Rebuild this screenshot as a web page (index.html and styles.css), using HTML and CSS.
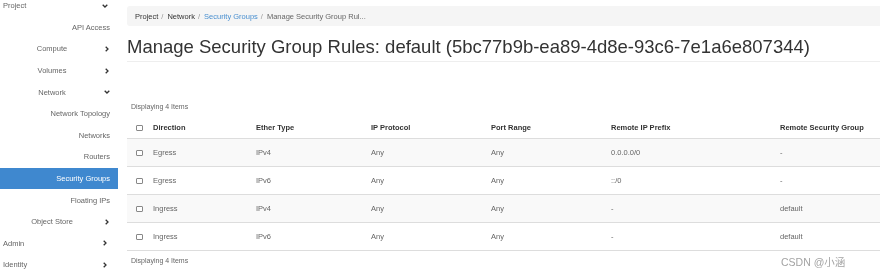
FILE: index.html
```html
<!DOCTYPE html>
<html lang="en">
<head>
    <meta charset="UTF-8">
    <title>Manage Security Group Rules</title>
    <link rel="stylesheet" href="styles.css">
</head>
<body>
    <div id="sidebar">
        <div class="navItem top">Project <svg class="chev" viewBox="0 0 6 4"><path d="M0.7 0.7 L3 3 L5.3 0.7"/></svg></div>
        <div class="navItem sub">API Access</div>
        <div class="navItem group"><span>Compute</span> <svg class="chev right" viewBox="0 0 4 6"><path d="M0.7 0.7 L3 3 L0.7 5.3"/></svg></div>
        <div class="navItem group"><span>Volumes</span> <svg class="chev right" viewBox="0 0 4 6"><path d="M0.7 0.7 L3 3 L0.7 5.3"/></svg></div>
        <div class="navItem group"><span>Network</span> <svg class="chev" viewBox="0 0 6 4"><path d="M0.7 0.7 L3 3 L5.3 0.7"/></svg></div>
        <div class="navItem sub">Network Topology</div>
        <div class="navItem sub">Networks</div>
        <div class="navItem sub">Routers</div>
        <div class="navItem sub active">Security Groups</div>
        <div class="navItem sub">Floating IPs</div>
        <div class="navItem group"><span>Object Store</span> <svg class="chev right" viewBox="0 0 4 6"><path d="M0.7 0.7 L3 3 L0.7 5.3"/></svg></div>
        <div class="navItem top">Admin <svg class="chev right" viewBox="0 0 4 6"><path d="M0.7 0.7 L3 3 L0.7 5.3"/></svg></div>
        <div class="navItem top">Identity <svg class="chev right" viewBox="0 0 4 6"><path d="M0.7 0.7 L3 3 L0.7 5.3"/></svg></div>
    </div>

    <div id="main">
        <div class="breadcrumb">
            <span>Project</span><span class="sep">/</span>
            <span>Network</span><span class="sep">/</span>
            <span class="link">Security Groups</span><span class="sep">/</span>
            <span class="current">Manage Security Group Rul...</span>
        </div>

        <h1 class="pageTitle">Manage Security Group Rules: default (5bc77b9b-ea89-4d8e-93c6-7e1a6e807344)</h1>

        <div class="countText">Displaying 4 Items</div>

        <table class="rulesTable">
            <colgroup>
                <col style="width: 18px">
                <col style="width: 103px">
                <col style="width: 115px">
                <col style="width: 120px">
                <col style="width: 120px">
                <col style="width: 169px">
                <col>
            </colgroup>
            <thead>
                <tr>
                    <th class="checkCell"><span class="checkbox"></span></th>
                    <th>Direction</th>
                    <th>Ether Type</th>
                    <th>IP Protocol</th>
                    <th>Port Range</th>
                    <th>Remote IP Prefix</th>
                    <th>Remote Security Group</th>
                </tr>
            </thead>
            <tbody>
                <tr>
                    <td class="checkCell"><span class="checkbox"></span></td>
                    <td>Egress</td><td>IPv4</td><td>Any</td><td>Any</td><td>0.0.0.0/0</td><td>-</td>
                </tr>
                <tr>
                    <td class="checkCell"><span class="checkbox"></span></td>
                    <td>Egress</td><td>IPv6</td><td>Any</td><td>Any</td><td>::/0</td><td>-</td>
                </tr>
                <tr>
                    <td class="checkCell"><span class="checkbox"></span></td>
                    <td>Ingress</td><td>IPv4</td><td>Any</td><td>Any</td><td>-</td><td>default</td>
                </tr>
                <tr>
                    <td class="checkCell"><span class="checkbox"></span></td>
                    <td>Ingress</td><td>IPv6</td><td>Any</td><td>Any</td><td>-</td><td>default</td>
                </tr>
            </tbody>
        </table>

        <div class="countText footer">Displaying 4 Items</div>
    </div>

    <div class="watermark">CSDN @小涵</div>
</body>
</html>
```

FILE: styles.css
```css
body {
    font-family: "Liberation Sans", Arial, sans-serif;
    background-color: white;
    color: #333;
    margin: 0;
    height: 277px;
    overflow: hidden;
    display: flex;
    -webkit-font-smoothing: antialiased;
}

#sidebar {
    width: 118px;
    flex-shrink: 0;
    margin-top: -4.8px;
    font-size: 7.5px;
    color: #666;
    will-change: transform; /* grayscale text AA */
}

.navItem {
    height: 21.6px;
    display: flex;
    align-items: center;
    box-sizing: border-box;
}

.navItem.top {
    justify-content: space-between;
    padding: 0 10px 0 3px;
}

.navItem.group span {
    width: 104px;
    text-align: center;
}

.navItem.sub {
    justify-content: flex-end;
    padding-right: 8px;
}

.navItem.active {
    background-color: #3f88cf;
    color: white;
}

.chev {
    width: 6px;
    height: 4px;
    fill: none;
    stroke: #333;
    stroke-width: 1.3;
}

.chev.right {
    width: 4px;
    height: 6px;
    margin-left: 1px;
    margin-right: 1px;
}

#main {
    flex-grow: 1;
    padding-left: 9px;
    min-width: 0;
    background-color: white;
    will-change: transform;
}

.breadcrumb {
    margin-top: 6px;
    height: 20px;
    background-color: #f5f5f5;
    border-radius: 3px 0 0 3px;
    padding-left: 8px;
    display: flex;
    align-items: center;
    font-size: 7.5px;
    color: #333;
}

.breadcrumb .sep {
    color: #999;
    margin: 0 4px 0 3px;
}

.breadcrumb .link {
    color: #4a90d0;
}

.breadcrumb .current {
    color: #666;
}

.pageTitle {
    margin: 10px 0 0 0;
    font-weight: normal;
    font-size: 18.5px;
    line-height: 22px;
    color: #333;
    padding-bottom: 3px;
    border-bottom: 1px solid #eee;
    white-space: nowrap;
}

.countText {
    margin-top: 40px;
    font-size: 7px;
    line-height: 10px;
    color: #666;
    padding-left: 4px;
}

.countText.footer {
    margin-top: 5px;
}

.rulesTable {
    margin-top: 5px;
    width: 753px;
    table-layout: fixed;
    border-collapse: collapse;
    font-size: 7.5px;
}

.rulesTable th,
.rulesTable td {
    text-align: left;
    padding: 0 0 0 8px;
    white-space: nowrap;
}

.rulesTable th {
    height: 21px;
    color: #333;
    font-weight: bold;
    border-bottom: 1px solid #ddd;
}

.rulesTable td {
    height: 27px;
    color: #666;
    border-bottom: 1px solid #ddd;
}

.rulesTable tbody tr:nth-child(odd) {
    background-color: #f9f9f9;
}

.rulesTable .checkCell {
    padding-left: 9px;
}

.checkbox {
    display: inline-block;
    width: 5px;
    height: 4px;
    border: 1px solid #888;
    border-radius: 1px;
    vertical-align: middle;
    background-color: white;
}

.watermark {
    position: absolute;
    left: 781px;
    top: 254px;
    font-family: "Liberation Sans", "Noto Sans CJK SC", sans-serif;
    font-size: 10.5px;
    color: #a3a3a3;
}
```
